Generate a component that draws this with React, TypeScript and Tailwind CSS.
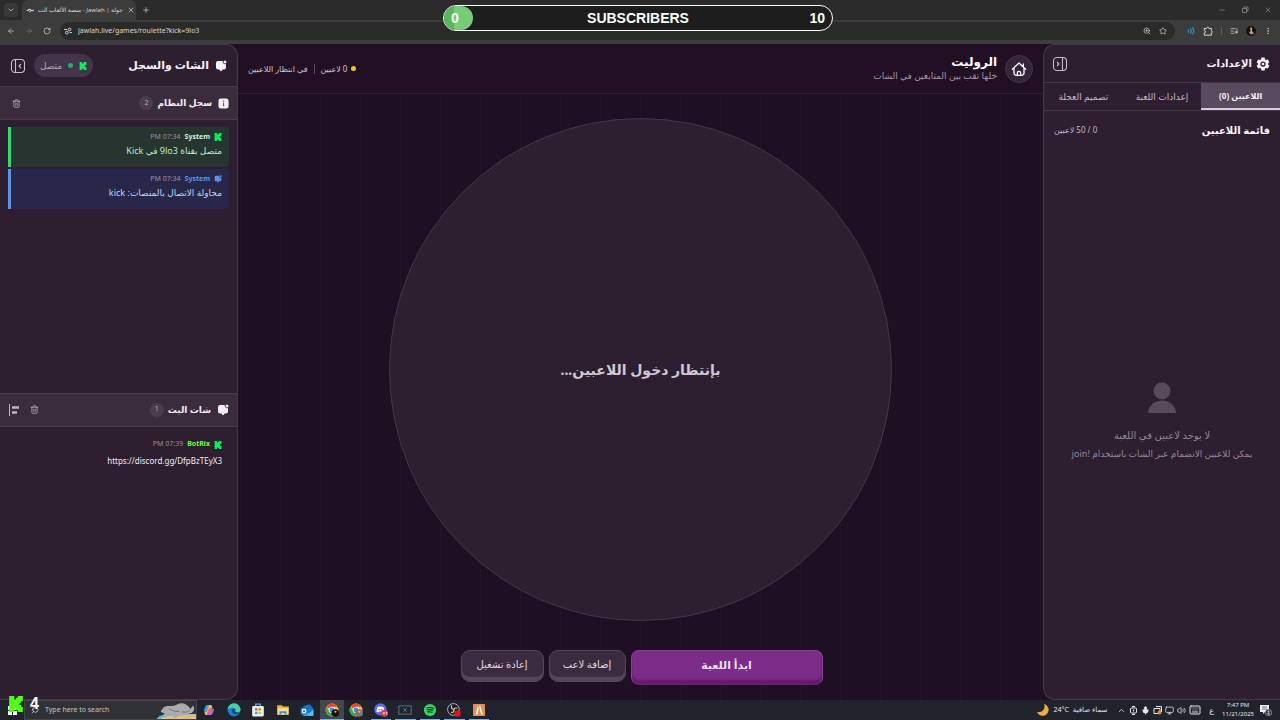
import type { ReactNode } from 'react';
import {
  ArrowLeft,
  ArrowRight,
  ChevronDown,
  ChevronUp,
  Keyboard,
  ListMusic,
  Mic,
  Minus,
  Monitor,
  MoreVertical,
  Plus,
  RotateCw,
  Search,
  Star,
  Trash2,
  Volume2,
  X,
  ZoomIn,
} from 'lucide-react';

function KickLogo({ className }: { className: string }) {
  return (
    <svg viewBox="0 0 512 512" className={className} fill="currentColor" aria-hidden="true">
      <path d="M37 0h164v114h55V57h55V0h165v171h-55v57h-55v56h55v57h55v171H311v-57h-55v-57h-55v114H37z" />
    </svg>
  );
}

function ChatIcon({ className }: { className: string }) {
  return (
    <svg viewBox="0 0 24 24" className={className} fill="currentColor" aria-hidden="true">
      <path d="M6 2h9.600a4.800 4.800 0 0 0 6.400 6V15a4 4 0 0 1-4 4h-2.600l-3.400 4-3.400-4H6a4 4 0 0 1-4-4V6a4 4 0 0 1 4-4z" />
      <circle cx="20" cy="4" r="3" />
    </svg>
  );
}

function InfoIcon({ className }: { className: string }) {
  return (
    <svg viewBox="0 0 24 24" className={className} aria-hidden="true">
      <rect x="1" y="1" width="22" height="22" rx="5" fill="#f3eef4" />
      <rect x="10.8" y="10" width="2.6" height="8" fill="#6b5b6e" />
      <rect x="10.8" y="5.5" width="2.6" height="2.8" fill="#6b5b6e" />
    </svg>
  );
}

function GearIcon({ className }: { className: string }) {
  return (
    <svg viewBox="0 0 24 24" className={className} fill="currentColor" fillRule="evenodd" aria-hidden="true">
      <path d="M9.3 1h5.4l.8 3.1 1.6.9 3.1-.9 2.7 4.7L20.600 11v2l2.300 2.200-2.700 4.700-3.100-.9-1.600.9-.8 3.100H9.300l-.8-3.100-1.600-.9-3.100.9-2.700-4.700L3.400 13v-2L1.100 8.800l2.700-4.700 3.100.9 1.600-.9zM12 7.500a4.500 4.500 0 1 0 0 9 4.500 4.500 0 0 0 0-9zm0 2.200a2.300 2.300 0 1 1 0 4.600 2.300 2.300 0 0 1 0-4.600z" />
    </svg>
  );
}

function HomeIcon({ className }: { className: string }) {
  return (
    <svg
      viewBox="0 0 24 24"
      className={className}
      fill="none"
      stroke="currentColor"
      strokeWidth="2"
      strokeLinejoin="round"
      strokeLinecap="round"
      aria-hidden="true"
    >
      <path d="M2 12.500 12 3l10 9.500M18.500 8.500V4.500M4.500 11v7a3.500 3.500 0 0 0 3.500 3.500h8a3.500 3.500 0 0 0 3.500-3.500v-7" />
      <path d="M9.500 21v-3a2.500 2.500 0 0 1 5 0v3" />
    </svg>
  );
}

function PanelToggle({ flip, label }: { flip: boolean; label: string }) {
  return (
    <button type="button" aria-label={label} className="text-[#c9bccb]">
      <svg viewBox="0 0 16 16" className="size-4" fill="none" stroke="currentColor" strokeWidth="1.1">
        <rect x="1.500" y="1.500" width="13" height="13" rx="3.500" />
        {flip ? <path d="M10.500 1.500v13M5 6l2 2-2 2" /> : <path d="M5.500 1.500v13M11 6 9 8l2 2" />}
      </svg>
    </button>
  );
}

function BrowserChrome() {
  return (
    <header className="shrink-0 bg-[#2b2b2b] font-['Noto_Sans','DejaVu_Sans',sans-serif] text-[#d8d8d8]">
      <div className="flex h-5 items-center">
        <button type="button" aria-label="Search tabs" className="ml-1 flex size-3.5 items-center justify-center rounded bg-[#383838]">
          <ChevronDown className="size-2" />
        </button>
        <div className="ml-1 flex h-full w-[114px] items-center justify-between gap-1 self-end rounded-t-md bg-[#3c3c3c] px-1">
          <svg viewBox="0 0 12 6" className="h-1.5 w-2 shrink-0" fill="none" stroke="#eee" strokeWidth="1.500">
            <path d="M1 3.500h3V2h3v2h4V2.500M5 5.500h2" />
          </svg>
          <span dir="rtl" className="text-[6px] whitespace-nowrap">
            جولة | Jawlah - منصة الألعاب الت
          </span>
          <button type="button" aria-label="Close tab">
            <X className="size-2" />
          </button>
        </div>
        <button type="button" aria-label="New tab" className="ml-1.5">
          <Plus className="size-2" />
        </button>
        <div className="ml-auto flex items-center gap-[15px] pr-2 text-[#8b8b8b]">
          <button type="button" aria-label="Minimize"><Minus className="size-2" /></button>
          <button type="button" aria-label="Restore">
            <svg viewBox="0 0 8 8" className="size-2" fill="none" stroke="currentColor" strokeWidth=".8">
              <path d="M1.500 2.500h4v4h-4zM3 2.500V1h4v4H5.500" />
            </svg>
          </button>
          <button type="button" aria-label="Close"><X className="size-2" /></button>
        </div>
      </div>
      <div className="flex h-6 items-center border-b-2 border-[#3c3c3c] bg-[#3c3c3c]">
        <div className="flex w-[60px] items-center gap-2.5 pl-[7px]">
          <button type="button" aria-label="Back"><ArrowLeft className="size-2" /></button>
          <button type="button" aria-label="Forward" className="text-[#777]"><ArrowRight className="size-2" /></button>
          <button type="button" aria-label="Reload"><RotateCw className="size-2" /></button>
        </div>
        <div className="flex h-[18px] min-w-0 flex-1 items-center rounded-full bg-[#2a2a2a] pr-2 pl-1">
          <svg viewBox="0 0 10 10" className="size-2" fill="none" stroke="currentColor" strokeWidth="1.200">
            <path d="M0 3h4M7 7h3" />
            <circle cx="7" cy="3" r="1.700" />
            <circle cx="3.500" cy="7" r="1.700" />
          </svg>
          <input
            aria-label="Address"
            defaultValue="jawlah.live/games/roulette?kick=9lo3"
            className="ml-1.5 min-w-0 flex-1 bg-transparent text-[7px] outline-none"
          />
          <ZoomIn className="size-2" />
          <Star className="ml-2 size-2" />
        </div>
        <div className="flex items-center gap-2 pr-2 pl-3">
          <svg viewBox="0 0 12 12" className="size-2" fill="none" stroke="#2b9bd8" strokeWidth="1.600">
            <path d="M2 3.500v5M5 2q2.500 4 0 8M8 1q4.500 5 0 10" />
          </svg>
          <svg viewBox="0 0 12 12" className="size-2.5" fill="none" stroke="currentColor" strokeWidth="1.200">
            <path d="M1.500 3h2.700a1.500 1.500 0 0 1 3 0H10v2.700a1.400 1.400 0 0 1 0 2.700V11H1.500V8.500a1.500 1.500 0 0 0 0-3z" />
          </svg>
          <span className="h-2 w-px bg-[#5a5a5a]" />
          <ListMusic className="size-2" />
          <svg viewBox="0 0 10 10" className="size-2.5">
            <circle cx="5" cy="5" r="5" fill="#17100d" />
            <path d="M4 1.500h2.200L6 5l2 2.500-3 1-2-2 1.500-1.500z" fill="#c09a80" />
          </svg>
          <MoreVertical className="size-2" />
        </div>
      </div>
    </header>
  );
}

function SectionHeader({
  icon,
  title,
  count,
  children,
}: {
  icon: ReactNode;
  title: string;
  count: number;
  children: ReactNode;
}) {
  return (
    <div className="flex h-[34px] items-center gap-1 border-y border-[#4a3b4e] bg-[#3a2b3d] px-2 text-[#f3eef4]">
      {icon}
      <h3 className="mr-0.5 text-[9px] font-bold">{title}</h3>
      <span className="flex size-3.5 items-center justify-center rounded-full bg-[#4b3c4e] text-[7px] text-[#b9acbb]">
        {count}
      </span>
      <div className="mr-auto flex items-center gap-2.5 text-[#c0b3c2]">{children}</div>
    </div>
  );
}

function LogMessage({
  tone,
  text,
}: {
  tone: 'kick' | 'info';
  text: string;
}) {
  const kick = tone === 'kick';
  return (
    <li
      className={
        kick
          ? 'h-10 rounded-r-sm border-l-[3px] border-[#2fd873] bg-[#28342f] px-[7px] pt-1 text-[#b5eecb]'
          : 'h-10 rounded-r-sm border-l-[3px] border-[#5b92e8] bg-[#28274a] px-[7px] pt-1 text-[#bed5fb]'
      }
    >
      <div className="flex h-3 items-center gap-1 text-[7px]">
        {kick ? <KickLogo className="size-2 text-[#00f55a]" /> : <ChatIcon className="size-2 text-[#5b92e8]" />}
        <span className={kick ? 'font-bold text-[#c8fbd9]' : 'font-bold text-[#5f97ec]'}>System</span>
        <time className="text-[#9b929e]">07:34 PM</time>
      </div>
      <p className="text-[9px] leading-4">{text}</p>
    </li>
  );
}

function ChatPanel() {
  return (
    <aside className="flex w-[238px] shrink-0 flex-col rounded-r-xl border border-l-0 border-[#47374b] bg-[#2d1e30]">
      <div className="flex h-[41px] shrink-0 items-center gap-1.5 px-2.5 text-[#f6f1f7]">
        <ChatIcon className="size-3" />
        <h2 className="text-[11px] font-bold">الشات والسجل</h2>
        <div className="mr-auto flex h-[23px] items-center gap-1.5 rounded-full bg-[#44344a] px-1.5 text-[#b3a5b8]">
          <KickLogo className="size-2 text-[#00f55a]" />
          <span className="size-[5px] rounded-full bg-[#2fa766]" />
          <span className="text-[9px]">متصل</span>
        </div>
        <div className="mr-0.5 flex">
          <PanelToggle flip={false} label="طي لوحة الشات" />
        </div>
      </div>
      <section className="flex min-h-0 flex-1 flex-col">
        <SectionHeader icon={<InfoIcon className="size-[11px]" />} title="سجل النظام" count={2}>
          <button type="button" aria-label="مسح السجل" className="ml-1"><Trash2 className="size-[9px]" /></button>
        </SectionHeader>
        <ul className="flex flex-col gap-0.5 px-2 pt-[7px]">
          <LogMessage tone="kick" text="متصل بقناة 9lo3 في Kick" />
          <LogMessage tone="info" text="محاولة الاتصال بالمنصات: kick" />
        </ul>
      </section>
      <section className="flex min-h-0 flex-1 flex-col">
        <SectionHeader icon={<ChatIcon className="size-3" />} title="شات البث" count={1}>
          <button type="button" aria-label="مسح الشات"><Trash2 className="size-[9px]" /></button>
          <button type="button" aria-label="محاذاة الرسائل">
            <svg viewBox="0 0 12 12" className="size-3" fill="none" stroke="currentColor">
              <path d="M1.500 0v12" strokeWidth="1" />
              <path d="M4 3.500h7M4 8.500h5" strokeWidth="2.500" />
            </svg>
          </button>
        </SectionHeader>
        <div className="px-[15px] pt-3">
          <div className="flex h-3 items-center gap-1 text-[7px]">
            <KickLogo className="size-2 text-[#00f55a]" />
            <span className="font-bold text-[#75fd46]">BotRix</span>
            <time className="text-[#9b929e]">07:39 PM</time>
          </div>
          <p className="mt-0.5 text-[8px] leading-4 text-[#f1ecf2]">https://discord.gg/DfpBzTEyX3</p>
        </div>
      </section>
    </aside>
  );
}

function SettingsPanel() {
  return (
    <aside className="flex w-[237px] shrink-0 flex-col rounded-l-xl border border-r-0 border-[#47374b] bg-[#2d1e30]">
      <div className="flex h-[37px] items-center gap-1 pr-2.5 pl-2 text-[#f6f1f7]">
        <GearIcon className="size-3.5" />
        <h2 className="text-[10px] font-bold">الإعدادات</h2>
        <div className="mr-auto flex">
          <PanelToggle flip label="طي لوحة الإعدادات" />
        </div>
      </div>
      <nav className="grid h-[29px] grid-cols-3 border-y border-[#443548] text-[9px] text-[#c4b7c6]">
        <button type="button" className="border-b-2 border-[#d9cddb] bg-[#5a4a5d] text-[8px] font-bold text-[#f6f1f7]">اللاعبين (0)</button>
        <button type="button">إعدادات اللعبة</button>
        <button type="button">تصميم العجلة</button>
      </nav>
      <div className="flex h-[38px] items-center justify-between px-2.5">
        <h3 className="text-[10px] font-bold text-[#fbf7fc]">قائمة اللاعبين</h3>
        <span className="text-[8px] text-[#c4b7c6]">0 / 50 لاعبين</span>
      </div>
      <div className="flex flex-1 flex-col items-center justify-center pb-1 text-[#94879a]">
        <svg viewBox="0 0 28 32" className="h-8 w-7" fill="#59495c" aria-hidden="true">
          <circle cx="14" cy="10" r="8.500" />
          <path d="M0 32a14 12.500 0 0 1 28 0z" />
        </svg>
        <p className="mt-3 text-[10px] leading-5">لا يوجد لاعبين في اللعبة</p>
        <p className="text-[9px] leading-[18px]">يمكن للاعبين الانضمام عبر الشات باستخدام !join</p>
      </div>
    </aside>
  );
}

function Stage() {
  return (
    <main className="flex min-w-0 flex-1 flex-col">
      <div className="flex h-[50px] shrink-0 items-center gap-2 border-b border-[#2d1d31] bg-[#211023] px-2.5">
        <a
          href="#home"
          aria-label="الرئيسية"
          className="flex size-7 items-center justify-center rounded-full border border-[#443548] bg-[#34253a] text-white"
        >
          <HomeIcon className="size-4" />
        </a>
        <div>
          <h1 className="text-[12px] leading-[15px] font-bold text-white">الروليت</h1>
          <p className="text-[9px] leading-[14px] text-[#a396a7]">خلها تقب بين المتابعين في الشات</p>
        </div>
        <div className="mr-auto flex items-center gap-1.5 text-[8px] text-[#d0c6d3]">
          <span className="flex items-center gap-1">
            <span className="size-[5px] rounded-full bg-[#f7c325]" />0 لاعبين
          </span>
          <span className="h-2.5 w-px bg-[#5c4d60]" />
          <span>في انتظار اللاعبين</span>
        </div>
      </div>
      <div className="flex min-h-0 flex-1 items-center justify-center py-6">
        <div className="flex aspect-square h-full max-w-full items-center justify-center rounded-full border border-[#443548] bg-[#2d1f30]">
          <p className="text-[14px] font-bold text-[#d0c8d2]">بإنتظار دخول اللاعبين...</p>
        </div>
      </div>
      <div className="flex h-[55px] shrink-0 items-start justify-center gap-[5px] pt-[5px] pl-0.5">
        <button
          type="button"
          className="h-[35px] w-48 rounded-lg border border-[#8b3f97] border-b-[#6d2179] bg-[#7b2b88] pb-1 text-[11px] font-bold text-[#ecdff0] shadow-[inset_0_-4px_2px_#65196f]"
        >
          ابدأ اللعبة
        </button>
        <button
          type="button"
          className="h-8 w-[77px] rounded-[9px] border border-[#56475a] bg-[#3b2b3f] pb-1 text-[10px] font-medium text-[#e3d9e5] shadow-[inset_0_-4px_1px_#56465a]"
        >
          إضافة لاعب
        </button>
        <button
          type="button"
          className="h-8 w-[83px] rounded-[9px] border border-[#56475a] bg-[#3b2b3f] pb-1 text-[10px] font-medium text-[#e3d9e5] shadow-[inset_0_-4px_1px_#56465a]"
        >
          إعادة تشغيل
        </button>
      </div>
    </main>
  );
}

function Chrome({ badge }: { badge: string }) {
  return (
    <svg viewBox="0 0 24 24" className="size-3.5">
      <circle cx="12" cy="12" r="11" fill="#f5c33b" />
      <path d="M12 12 2.500 6.500A11 11 0 0 1 21.500 6.500H12z" fill="#e04a3f" />
      <path d="M12 12 7.200 14.800 2.500 6.500A11 11 0 0 0 11 23l5-8.500z" fill="#37a853" />
      <circle cx="12" cy="12" r="5.300" fill="#fff" />
      <circle cx="12" cy="12" r="4.200" fill="#4285f4" />
      <circle cx="17.500" cy="17" r="6.500" fill={badge} />
      <circle cx="18" cy="15" r="1.800" fill="#d9b49a" />
    </svg>
  );
}

const taskbarApps: { name: string; state: 'idle' | 'open' | 'active'; icon: ReactNode }[] = [
  {
    name: 'Copilot',
    state: 'idle',
    icon: (
      <svg viewBox="0 0 24 24" className="size-3">
        <path d="M8 2h8l-4 13H3c-3 0 2-13 5-13z" fill="#3aa0e8" />
        <path d="M8 15 12 2h4c2 0 2 4 3 6l-6 2-3 12H6c-3 0-3-7-3-7z" fill="#e8c54a" />
        <path d="M12 9h9c3 0-2 13-5 13H8z" fill="#c45be0" />
        <path d="m12 9-3 9h5l3-9z" fill="#ef6c67" />
      </svg>
    ),
  },
  {
    name: 'Edge',
    state: 'idle',
    icon: (
      <svg viewBox="0 0 24 24" className="size-3.5">
        <circle cx="12" cy="12" r="11" fill="#1c7fd0" />
        <path d="M1 11A11 11 0 0 1 23 12c0 5-8 5-8 2 1-3-1-6-5-6-5 0-8 2-9 3z" fill="#48cfa5" />
        <path d="M10 10c-3 4 0 10 6 9 3 0 5-2 6-3-4 2-9 0-9-3 0-1 1-2 0-3z" fill="#0c3d78" />
      </svg>
    ),
  },
  {
    name: 'Store',
    state: 'idle',
    icon: (
      <svg viewBox="0 0 24 24" className="size-3.5">
        <path d="M8 6V2h8v4" fill="none" stroke="#48b5ea" strokeWidth="2" />
        <rect x="2" y="5" width="20" height="18" rx="2" fill="#eee" />
        <path d="M7 9h4v4H7z" fill="#e45335" />
        <path d="M13 9h4v4h-4z" fill="#73aa32" />
        <path d="M7 15h4v4H7z" fill="#2c9fe3" />
        <path d="M13 15h4v4h-4z" fill="#efb521" />
      </svg>
    ),
  },
  {
    name: 'Explorer',
    state: 'idle',
    icon: (
      <svg viewBox="0 0 24 24" className="size-3.5">
        <path d="M2 4h8l2 2h10v14H2z" fill="#e9b63e" />
        <path d="M3 9h18v11H3z" fill="#f9df8c" />
        <path d="M6 14h12v6h-3v-3H9v3H6z" fill="#3b93d6" />
      </svg>
    ),
  },
  {
    name: 'Outlook',
    state: 'idle',
    icon: (
      <svg viewBox="0 0 24 24" className="size-3.5">
        <path d="m6 5 10-3 7 7v13H4z" fill="#1b6fc4" />
        <path d="m6 14 9 4 8-7v11H6z" fill="#56c3f4" />
        <rect x="1" y="8" width="12" height="12" rx="2" fill="#1483d6" />
        <circle cx="7" cy="14" r="3" fill="none" stroke="#fff" strokeWidth="2" />
      </svg>
    ),
  },
  { name: 'Chrome', state: 'active', icon: <Chrome badge="#151210" /> },
  { name: 'Chrome profile', state: 'idle', icon: <Chrome badge="#7c7370" /> },
  {
    name: 'Discord',
    state: 'open',
    icon: (
      <svg viewBox="0 0 24 24" className="size-3.5">
        <circle cx="11" cy="11" r="10.500" fill="#5f66e8" />
        <path d="M6 7q5-2 10 0l2 7q-2 2-4 2l-1-1.500H9L8 16q-2 0-4-2z" fill="#fff" />
        <circle cx="8.700" cy="11.500" r="1.400" fill="#5f66e8" />
        <circle cx="13.300" cy="11.500" r="1.400" fill="#5f66e8" />
        <circle cx="18" cy="17.500" r="6" fill="#d83c4c" />
        <path d="M15 17.500h4M17 15.500v4M20 16h2v4" stroke="#fff" strokeWidth="1.200" fill="none" />
      </svg>
    ),
  },
  {
    name: 'Capture',
    state: 'open',
    icon: (
      <svg viewBox="0 0 24 24" className="size-3.5" fill="none" stroke="#567e80" strokeWidth="1.600">
        <rect x="1.500" y="5" width="21" height="14" />
        <path d="m9 9 6 6M15 9l-6 6" />
      </svg>
    ),
  },
  {
    name: 'Spotify',
    state: 'open',
    icon: (
      <svg viewBox="0 0 24 24" className="size-3.5">
        <circle cx="12" cy="12" r="10.500" fill="#35d463" />
        <path d="M6 8.500q7-2 12.500 1M6.500 12q6-1.600 11 1M7 15.500q5-1.300 9 1" fill="none" stroke="#14321f" strokeWidth="1.900" />
      </svg>
    ),
  },
  {
    name: 'OBS',
    state: 'open',
    icon: (
      <svg viewBox="0 0 24 24" className="size-3.5">
        <circle cx="11" cy="11" r="10" fill="#1c1a1d" stroke="#c9c9c9" strokeWidth="1.500" />
        <path d="M8 4q-2 6 4 7M18 9q-6-2-7 4M7 16q6 1 5-5" fill="none" stroke="#c9c9c9" strokeWidth="2" />
        <circle cx="18" cy="18" r="5.500" fill="#e01320" />
      </svg>
    ),
  },
  {
    name: 'FiveM',
    state: 'open',
    icon: (
      <svg viewBox="0 0 24 24" className="size-3">
        <rect width="24" height="24" fill="#ea8a50" />
        <path d="m10 3-5 18h4l2.500-11zM12.500 3l1 7L16 21h4L14.500 3z" fill="#fff" />
      </svg>
    ),
  },
];

function Taskbar() {
  return (
    <footer className="flex h-5 shrink-0 items-center bg-[#20222c] font-['Noto_Sans','DejaVu_Sans',sans-serif] text-[#e8e8ea]">
      <button type="button" aria-label="Start" className="flex h-full w-6 items-center justify-center">
        <svg viewBox="0 0 9 9" className="size-[9px]" fill="#fff">
          <path d="M0 0h4v4H0zM5 0h4v4H5zM0 5h4v4H0zM5 5h4v4H5z" />
        </svg>
      </button>
      <label className="flex h-full w-[173px] items-center overflow-hidden border border-[#45454b] bg-[#303135] pl-1.5">
        <Search className="size-2 -scale-x-100" />
        <input
          aria-label="Search"
          placeholder="Type here to search"
          className="ml-1.5 min-w-0 flex-1 bg-transparent text-[7px] outline-none placeholder:text-[#c4c4c8]"
        />
        <svg viewBox="0 0 40 20" className="h-5 w-10 shrink-0" aria-hidden="true">
          <path d="M0 20q3-6 14-6h26v6z" fill="#68bdd9" />
          <path d="M3 20q6-5 16-4l21-2v6z" fill="#e3bd83" />
          <path d="M7 8q2-2.500 6-2 4 .5 8-1.500 5-2.500 9 0 3 2 4.500 4.500l2-3q2 0 1.500 3.500-1 4-6 4.500-4 1.500-9 1.500l-4 2.500q-2-.5-1-2.500-4 0-6-1l-4 2q-1-1.500.500-3-3-1-4-2z" fill="#a9abac" />
          <path d="M13 9q5 3 10 2.500M26 12q5 1 8-1.500" fill="none" stroke="#75787a" />
        </svg>
      </label>
      <div className="grid h-full w-[294px] grid-cols-12">
        {taskbarApps.map((app) => (
          <button
            key={app.name}
            type="button"
            aria-label={app.name}
            className={
              app.state === 'active'
                ? 'flex items-center justify-center border-b border-[#74b5e8] bg-[#454750]'
                : app.state === 'open'
                  ? 'mx-0.5 flex items-center justify-center border-b border-[#74b5e8]'
                  : 'flex items-center justify-center border-b border-transparent'
            }
          >
            {app.icon}
          </button>
        ))}
      </div>
      <div className="ml-auto flex h-full items-center pr-2">
        <svg viewBox="0 0 12 12" className="size-3" fill="#f3ab3c">
          <path d="M7 0a6 6 0 1 1-7 8c5 1 9-3 7-8z" />
        </svg>
        <span className="ml-1 text-[7px]">24°C</span>
        <span dir="rtl" className="ml-1 text-[7px]">سماء صافية</span>
        <div className="ml-2.5 flex items-center gap-[3px]">
          <ChevronUp className="size-[9px]" />
          <svg viewBox="0 0 9 9" className="size-[9px]" fill="none" stroke="currentColor">
            <rect x="1.500" y="2" width="6" height="5" rx="1" />
            <path d="M3 .500h3M3 8.500h3M4.500 3.500v2" />
          </svg>
          <Mic className="size-[9px]" fill="currentColor" />
          <svg viewBox="0 0 9 9" className="size-[9px]" fill="none" stroke="currentColor">
            <path d="M1 2.500h6v5H1zM3 .500h5.500V6" />
            <circle cx="6.500" cy="6.500" r="2" fill="#ee8430" stroke="none" />
          </svg>
          <Monitor className="size-[9px]" />
          <Volume2 className="size-[9px]" />
          <Keyboard className="size-3" />
        </div>
        <span className="ml-2 text-[8px]">ع</span>
        <div className="ml-2 text-center text-[6px] leading-[9px]">
          <div>7:47 PM</div>
          <div>11/21/2025</div>
        </div>
        <svg viewBox="0 0 12 12" className="ml-1.5 size-3">
          <path d="M0 1h9v7H5L3 10V8H0z" fill="#eee" />
          <path d="M2 3h5M2 5h5" stroke="#555" strokeWidth=".8" />
          <circle cx="8.500" cy="8.500" r="3.200" fill="#33353d" stroke="#bbb" strokeWidth=".6" />
          <path d="M7.600 7.500q1.800-1 1.500.6L7.600 10h2" fill="none" stroke="#fff" strokeWidth=".7" />
        </svg>
      </div>
    </footer>
  );
}

export default function App() {
  return (
    <div className="relative flex h-screen flex-col overflow-hidden bg-[#3c3c3c]">
      <BrowserChrome />
      <div
        dir="rtl"
        className="flex min-h-0 flex-1 bg-[#1f0f22] bg-[linear-gradient(to_right,#251428_1px,transparent_1px),linear-gradient(to_bottom,#231225_1px,transparent_1px)] bg-[size:40px_40px] font-['Noto_Sans','DejaVu_Sans',sans-serif]"
      >
        <SettingsPanel />
        <Stage />
        <ChatPanel />
      </div>
      <Taskbar />

      <div className="absolute top-[5px] left-1/2 flex h-[26px] w-[390px] -translate-x-[197px] items-center justify-between rounded-full border border-white bg-[#1d1d1d] pr-[7px] font-['Liberation_Sans',Arial,sans-serif] text-[14px] font-bold text-white">
        <span className="flex h-full w-[29px] items-center rounded-full bg-linear-to-r from-[#58b756] from-35% to-[#7acb75] to-35% pl-[7px]">
          0
        </span>
        <span>SUBSCRIBERS</span>
        <span className="w-[22px] text-right">10</span>
      </div>

      <div className="absolute bottom-1.5 left-2 flex items-center gap-1.5 font-['Liberation_Sans',Arial,sans-serif] text-[16px] leading-5 font-bold text-white">
        <KickLogo className="size-4 text-[#53fc18]" />
        <span>4</span>
      </div>
    </div>
  );
}
